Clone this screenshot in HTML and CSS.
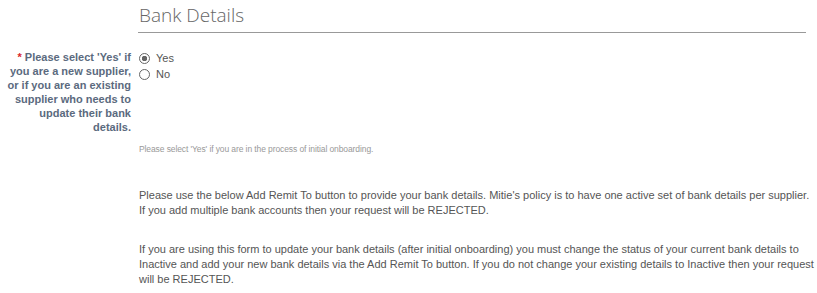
FILE: index.html
```html
<!DOCTYPE html>
<html lang="en">

<head>
    <meta charset="UTF-8">
    <meta name="viewport" content="width=device-width, initial-scale=1.0">
    <title>Bank Details</title>
    <link rel="stylesheet" href="styles.css">
</head>

<body>
    <div class="form-page">
        <div class="section-row">
            <div class="label-col"></div>
            <div class="field-col">
                <h2 class="section-title">Bank Details</h2>
            </div>
        </div>

        <div class="section-row question-row">
            <div class="label-col required">Please select 'Yes' if you are a new supplier, or if you are an existing supplier who needs to update their bank details.</div>
            <div class="field-col">
                <label class="radio-option">
                    <input type="radio" name="newSupplier" checked>
                    <span>Yes</span>
                </label>
                <label class="radio-option">
                    <input type="radio" name="newSupplier">
                    <span>No</span>
                </label>
            </div>
        </div>

        <div class="section-row">
            <div class="label-col"></div>
            <div class="field-col">
                <p class="hint">Please select 'Yes' if you are in the process of initial onboarding.</p>
            </div>
        </div>

        <div class="section-row">
            <div class="label-col"></div>
            <div class="field-col info">
                <p>Please use the below Add Remit To button to provide your bank details. Mitie's policy is to have one active set of bank details per supplier. If you add multiple bank accounts then your request will be REJECTED.</p>
                <p>If you are using this form to update your bank details (after initial onboarding) you must change the status of your current bank details to Inactive and add your new bank details via the Add Remit To button. If you do not change your existing details to Inactive then your request will be REJECTED.</p>
            </div>
        </div>
    </div>
</body>

</html>
```

FILE: styles.css
```css
body {
    font-family: Arial, "Liberation Sans", sans-serif;
    margin: 0;
    background-color: #fff;
    color: #555;
}

.form-page {
    width: 817px;
}

.section-row {
    display: flex;
}

.label-col {
    width: 131px;
    flex-shrink: 0;
    padding-right: 7px;
    text-align: right;
    font-size: 11px;
    font-weight: bold;
    line-height: 14px;
    color: #5b6a7e;
}

/* red asterisk for mandatory questions */
.required::before {
    content: "*";
    color: #d9262b;
    margin-right: 3px;
}

.field-col {
    flex: 1;
    min-width: 0;
}

.section-title {
    margin: 4px 11px 0 0;
    padding: 0 0 6px 1px;
    font-family: "Open Sans", sans-serif;
    font-weight: 300;
    font-size: 19px;
    line-height: 22px;
    color: #666;
    border-bottom: 1px solid #999;
}

.question-row {
    margin-top: 17px;
}

.radio-option {
    display: flex;
    align-items: center;
    height: 16px;
    font-size: 11px;
    color: #555;
}

.radio-option input {
    appearance: none;
    -webkit-appearance: none;
    box-sizing: border-box;
    margin: 0 6px 0 1px;
    width: 11px;
    height: 11px;
    border: 1px solid #666;
    border-radius: 50%;
    background-color: #fff;
}

.radio-option input:checked {
    background: radial-gradient(circle, #666 0, #666 2.5px, #fff 3px);
}

.hint {
    margin: 10px 0 0 1px;
    font-size: 8.5px;
    letter-spacing: -0.1px;
    color: #999;
}

.info {
    margin-top: 34px;
    font-size: 11px;
    line-height: 15px;
    color: #555;
}

.info p {
    margin: 0 0 24px 1px;
}

.info p:last-child {
    margin-bottom: 0;
}
```
